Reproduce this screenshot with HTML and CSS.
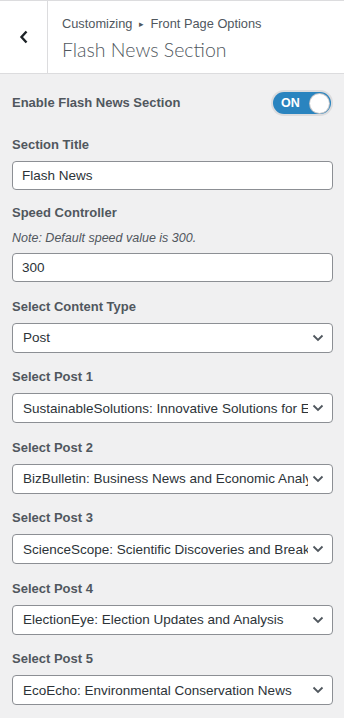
FILE: index.html
```html
<!DOCTYPE html>
<html>
<head>
    <title>Flash News Section</title>
    <meta charset="UTF-8">
    <meta name="viewport" content="width=device-width, initial-scale=1.0">
    <link rel="stylesheet" href="styles.css">
</head>
<body>
    <div class="section-header">
        <button class="back-btn" aria-label="Back">
            <svg width="10" height="14" viewBox="0 0 10 14"><path d="M7.5 1.5 L2.5 7 L7.5 12.5" fill="none" stroke="#1d2327" stroke-width="2.4"/></svg>
        </button>
        <div class="header-text">
            <div class="crumb">Customizing <span class="arrow">&#9656;</span> Front Page Options</div>
            <h3>Flash News Section</h3>
        </div>
    </div>

    <div class="controls">
        <div class="control toggle-row">
            <span class="label">Enable Flash News Section</span>
            <div class="toggle">
                <span class="toggle-text">ON</span>
                <span class="knob"></span>
            </div>
        </div>

        <div class="control text-control">
            <span class="label">Section Title</span>
            <input type="text" value="Flash News">
        </div>

        <div class="control">
            <span class="label">Speed Controller</span>
            <span class="note">Note: Default speed value is 300.</span>
            <input type="text" value="300">
        </div>

        <div class="control">
            <span class="label">Select Content Type</span>
            <div class="select-wrapper">
                <select><option>Post</option></select>
                <svg class="chev" width="12" height="8" viewBox="0 0 12 8"><path d="M1.5 1.5 L6 6 L10.5 1.5" fill="none" stroke="#50575e" stroke-width="1.8"/></svg>
            </div>
        </div>

        <div class="control">
            <span class="label">Select Post 1</span>
            <div class="select-wrapper">
                <select><option>SustainableSolutions: Innovative Solutions for Environmental Challenges</option></select>
                <svg class="chev" width="12" height="8" viewBox="0 0 12 8"><path d="M1.5 1.5 L6 6 L10.5 1.5" fill="none" stroke="#50575e" stroke-width="1.8"/></svg>
            </div>
        </div>

        <div class="control">
            <span class="label">Select Post 2</span>
            <div class="select-wrapper">
                <select><option>BizBulletin: Business News and Economic Analysis</option></select>
                <svg class="chev" width="12" height="8" viewBox="0 0 12 8"><path d="M1.5 1.5 L6 6 L10.5 1.5" fill="none" stroke="#50575e" stroke-width="1.8"/></svg>
            </div>
        </div>

        <div class="control">
            <span class="label">Select Post 3</span>
            <div class="select-wrapper">
                <select><option>ScienceScope: Scientific Discoveries and Breakthroughs</option></select>
                <svg class="chev" width="12" height="8" viewBox="0 0 12 8"><path d="M1.5 1.5 L6 6 L10.5 1.5" fill="none" stroke="#50575e" stroke-width="1.8"/></svg>
            </div>
        </div>

        <div class="control">
            <span class="label">Select Post 4</span>
            <div class="select-wrapper">
                <select><option>ElectionEye: Election Updates and Analysis</option></select>
                <svg class="chev" width="12" height="8" viewBox="0 0 12 8"><path d="M1.5 1.5 L6 6 L10.5 1.5" fill="none" stroke="#50575e" stroke-width="1.8"/></svg>
            </div>
        </div>

        <div class="control">
            <span class="label">Select Post 5</span>
            <div class="select-wrapper">
                <select><option>EcoEcho: Environmental Conservation News</option></select>
                <svg class="chev" width="12" height="8" viewBox="0 0 12 8"><path d="M1.5 1.5 L6 6 L10.5 1.5" fill="none" stroke="#50575e" stroke-width="1.8"/></svg>
            </div>
        </div>
    </div>
</body>
</html>
```

FILE: styles.css
```css
:root {
    --text: #50575e;
    --dark: #2c3338;
    --border: #8c8f94;
    --blue: #2a84bf;
    --bg: #f0f0f1;
}

body {
    margin: 0;
    background: var(--bg);
    font-family: "Liberation Sans", Arial, sans-serif;
    color: var(--text);
}

/* header */
.section-header {
    display: flex;
    background: #fff;
    border-top: 1px solid #dcdcde;
    border-bottom: 1px solid #dcdcde;
    height: 72px;
}

.back-btn {
    width: 48px;
    border: none;
    border-right: 1px solid #dcdcde;
    background: #fff;
    padding: 0;
    display: flex;
    align-items: center;
    justify-content: center;
}

.header-text {
    padding: 15px 14px 0;
}

.crumb {
    font-size: 12.8px;
    line-height: 16px;
}

.crumb .arrow {
    font-size: 9px;
    margin: 0 3px;
    vertical-align: 1px;
}

.header-text h3 {
    margin: 6px 0 0;
    font-family: Lato, "Liberation Sans", sans-serif;
    font-size: 19.5px;
    font-weight: 300;
    line-height: 24px;
}

/* controls */
.controls {
    padding: 18px 11px 0 12px;
}

.control {
    margin-bottom: 14.5px;
}

.text-control {
    margin-bottom: 13px;
}

.label {
    display: block;
    font-size: 13px;
    font-weight: bold;
    line-height: 20px;
    margin-bottom: 6px;
}

.note {
    display: block;
    font-size: 12.5px;
    font-style: italic;
    line-height: 18px;
    margin: 1px 0 6px;
}

.toggle-row {
    display: flex;
    justify-content: space-between;
    align-items: center;
    margin-bottom: 21px;
}

.toggle-row .label {
    margin: 0;
}

.toggle {
    box-sizing: border-box;
    width: 58px;
    height: 22px;
    margin-right: 2px;
    background: var(--blue);
    border-radius: 12px;
    box-shadow: 0 0 0 2px #dcdcde;
    display: flex;
    align-items: center;
    justify-content: space-between;
    padding: 0 2px 0 8px;
}

.toggle-text {
    color: #fff;
    font-size: 12.5px;
    font-weight: bold;
}

.knob {
    width: 19px;
    height: 19px;
    border-radius: 50%;
    background: #fff;
    box-shadow: 0 0 0 1px #c3c4c7;
}

input[type="text"], select {
    display: block;
    width: 100%;
    box-sizing: border-box;
    height: 30px;
    border: 1px solid var(--border);
    border-radius: 4px;
    background: #fff;
    font-family: "Liberation Sans", Arial, sans-serif;
    font-size: 13.5px;
    color: var(--dark);
    padding: 0 9px;
    margin: 0;
}

input[type="text"] {
    height: 29px;
}

.select-wrapper {
    position: relative;
}

select {
    appearance: none;
    -webkit-appearance: none;
    padding: 0 24px 0 10px;
}

.chev {
    position: absolute;
    right: 9px;
    top: 11px;
    pointer-events: none;
}
```
